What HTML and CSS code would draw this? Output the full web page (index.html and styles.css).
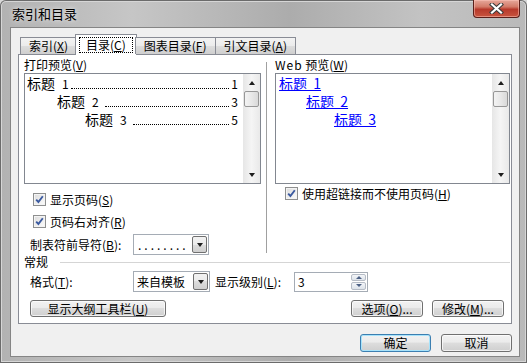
FILE: index.html
```html
<!DOCTYPE html>
<html>
<head>
    <meta charset="UTF-8">
    <title>索引和目录</title>
    <link rel="stylesheet" href="styles.css">
</head>
<body>
<div class="window">
    <div class="titlebar">
        <span class="title">索引和目录</span>
        <span class="close">
            <svg width="17" height="11" viewBox="0 0 17 11">
                <path d="M4 1.5 L13 9.5 M13 1.5 L4 9.5" stroke="#3a3a3a" stroke-width="4.2" stroke-linecap="square"/>
                <path d="M4 1.5 L13 9.5 M13 1.5 L4 9.5" stroke="#fff" stroke-width="2.2" stroke-linecap="square"/>
            </svg>
        </span>
    </div>

    <div class="client">
        <div class="tabs">
            <div class="tab">索引(<u>X</u>)</div>
            <div class="tab active"><span class="focus">目录(<u>C</u>)</span></div>
            <div class="tab">图表目录(<u>F</u>)</div>
            <div class="tab">引文目录(<u>A</u>)</div>
        </div>

        <div class="panel">
            <div class="cols">
                <div class="col">
                    <div class="caption">打印预览(<u>V</u>)</div>
                    <div class="preview">
                        <div class="lines">
                            <div class="toc"><span class="head">标题</span><span class="n">1</span><span class="dots"></span><span class="page">1</span></div>
                            <div class="toc lvl2"><span class="head">标题</span><span class="n">2</span><span class="dots"></span><span class="page">3</span></div>
                            <div class="toc lvl3"><span class="head">标题</span><span class="n">3</span><span class="dots"></span><span class="page">5</span></div>
                        </div>
                        <div class="scrollbar">
                            <div class="sb-btn"><span class="arrow-up"></span></div>
                            <div class="sb-thumb"></div>
                            <div class="sb-track"></div>
                            <div class="sb-btn"><span class="arrow-down"></span></div>
                        </div>
                    </div>

                    <label class="check first">
                        <span class="box"><svg width="11" height="11" viewBox="0 0 11 11"><path d="M2.2 5.6 L4.4 8 L8.8 2.2" fill="none" stroke="#3b5aa0" stroke-width="1.9"/></svg></span>
                        <span>显示页码(<u>S</u>)</span>
                    </label>
                    <label class="check second">
                        <span class="box"><svg width="11" height="11" viewBox="0 0 11 11"><path d="M2.2 5.6 L4.4 8 L8.8 2.2" fill="none" stroke="#3b5aa0" stroke-width="1.9"/></svg></span>
                        <span>页码右对齐(<u>R</u>)</span>
                    </label>

                    <div class="field leader">
                        <span class="field-label">制表符前导符(<u>B</u>):</span>
                        <div class="combo">
                            <span class="combo-text dotted">........</span>
                            <span class="combo-btn"><span class="arrow-down"></span></span>
                        </div>
                    </div>
                </div>

                <div class="vsep"></div>

                <div class="col">
                    <div class="caption"><span class="latin">Web</span> 预览(<u>W</u>)</div>
                    <div class="preview">
                        <div class="lines">
                            <div class="link lvl1"><a>标题&nbsp;&nbsp;1</a></div>
                            <div class="link lvl2"><a>标题&nbsp;&nbsp;2</a></div>
                            <div class="link lvl3"><a>标题&nbsp;&nbsp;3</a></div>
                        </div>
                        <div class="scrollbar">
                            <div class="sb-btn"><span class="arrow-up"></span></div>
                            <div class="sb-thumb"></div>
                            <div class="sb-track"></div>
                            <div class="sb-btn"><span class="arrow-down"></span></div>
                        </div>
                    </div>

                    <label class="check web">
                        <span class="box"><svg width="11" height="11" viewBox="0 0 11 11"><path d="M2.2 5.6 L4.4 8 L8.8 2.2" fill="none" stroke="#3b5aa0" stroke-width="1.9"/></svg></span>
                        <span>使用超链接而不使用页码(<u>H</u>)</span>
                    </label>
                </div>
            </div>

            <div class="group"><span>常规</span><span class="group-line"></span></div>

            <div class="field format">
                <span class="field-label">格式(<u>T</u>):</span>
                <div class="combo wide">
                    <span class="combo-text">来自模板</span>
                    <span class="combo-btn"><span class="arrow-down"></span></span>
                </div>
                <span class="level-label">显示级别(<u>L</u>):</span>
                <div class="spin">
                    <span class="spin-text">3</span>
                    <span class="spin-btns">
                        <span class="spin-btn"><span class="spin-up"></span></span>
                        <span class="spin-btn"><span class="spin-down"></span></span>
                    </span>
                </div>
            </div>

            <div class="panel-buttons">
                <button class="btn outline">显示大纲工具栏(<u>U</u>)</button>
                <span class="spacer"></span>
                <button class="btn small">选项(<u>O</u>)...</button>
                <button class="btn small">修改(<u>M</u>)...</button>
            </div>
        </div>

        <div class="dialog-buttons">
            <button class="btn ok default">确定</button>
            <button class="btn ok">取消</button>
        </div>
    </div>
</div>
</body>
</html>
```

FILE: styles.css
```css
body {
    margin: 0;
    font-family: "Noto Sans CJK SC", "Liberation Sans", sans-serif;
    font-size: 12px;
    color: #000;
    background: #d8d8d8;
}

.window {
    width: 527px;
    height: 363px;
    display: flex;
    flex-direction: column;
    box-sizing: border-box;
    border-radius: 6px 6px 0 0;
    background: linear-gradient(90deg, #b2b2b2 0%, #c6c6c6 25%, #acacac 55%, #c3c3c3 80%, #b9b9b9 100%);
    box-shadow: inset 0 0 0 1px #6b6b6b, inset 0 0 0 2px #d6d6d6;
}

/* titulek okna */
.titlebar {
    height: 27px;
    display: flex;
    justify-content: space-between;
    align-items: flex-start;
    flex: none;
}

.title {
    padding: 6px 0 0 12px;
    font-size: 13px;
    line-height: 16px;
    text-shadow: 0 0 5px rgba(255, 255, 255, 0.9);
}

.close {
    width: 47px;
    height: 18px;
    margin-right: 7px;
    box-sizing: border-box;
    border: 1px solid #5a1f1a;
    border-top: none;
    border-radius: 0 0 4px 4px;
    background: linear-gradient(#e6a89b, #d37a68 40%, #b7392b 55%, #c8553f 100%);
    box-shadow: inset 0 0 0 1px rgba(255, 200, 190, 0.5);
    display: flex;
    align-items: center;
    justify-content: center;
}

.client {
    flex: 1;
    margin: 0 7px 6px 10px;
    border: 1px solid #858585;
    background: #f0f0f0;
    padding: 6px 7px 0 7px;
    display: flex;
    flex-direction: column;
}

/* zalozky */
.tabs {
    display: flex;
    align-items: flex-end;
    height: 20px;
    padding-left: 2px;
    position: relative;
    z-index: 1;
}

.tab {
    height: 17px;
    box-sizing: border-box;
    border: 1px solid #898c95;
    border-bottom: none;
    padding: 0 8px;
    line-height: 15px;
    margin-right: -1px;
    background: linear-gradient(#f3f3f3, #ebebeb 50%, #dddddd 50%, #cfcfcf);
}

.tab.active {
    height: 21px;
    margin: 0 -2px -1px -1px;
    padding: 2px 3px 0;
    background: #fff;
}

.focus {
    display: inline-block;
    border: 1px dotted #000;
    padding: 0 6px;
    line-height: 14px;
}

.panel {
    height: 270px;
    box-sizing: border-box;
    border: 1px solid #898c95;
    background: #fff;
    padding: 2px 1px 0 5px;
}

.cols {
    display: grid;
    grid-template-columns: 237px 14px 1fr;
}

.vsep {
    border-left: 1px solid #a0a0a0;
    margin: 5px 0 2px 5px;
}

.caption {
    height: 16px;
    line-height: 16px;
}

.latin {
    letter-spacing: 1px;
}

.preview {
    height: 111px;
    box-sizing: border-box;
    border: 1px solid #828790;
    display: flex;
    background: #fff;
}

.lines {
    flex: 1;
    padding: 0 5px 0 2px;
}

.toc {
    display: flex;
    align-items: baseline;
    height: 18px;
    line-height: 18px;
}

.toc .head {
    font-size: 14px;
}

.toc .n {
    margin-left: 7px;
}

.dots {
    flex: 1;
    border-bottom: 1px dotted #000;
    margin: 0 2px 0 2px;
}

.toc.lvl2 {
    padding-left: 30px;
}

.toc.lvl3 {
    padding-left: 58px;
}

.toc.lvl2 .dots,
.toc.lvl3 .dots {
    margin-left: 6px;
}

.link {
    height: 18px;
    line-height: 18px;
    font-size: 14px;
}

.link a {
    color: #0000ff;
    text-decoration: underline;
}

.link.lvl1 {
    padding-left: 1px;
}

.link.lvl2 {
    padding-left: 28px;
}

.link.lvl3 {
    padding-left: 56px;
}

/* posuvnik */
.scrollbar {
    width: 17px;
    display: flex;
    flex-direction: column;
    align-items: center;
    background: linear-gradient(90deg, #e6e6e6, #f5f5f5 50%, #e9e9e9);
}

.sb-btn {
    height: 17px;
    width: 17px;
    display: flex;
    align-items: center;
    justify-content: center;
    flex: none;
}

.sb-thumb {
    width: 15px;
    height: 16px;
    box-sizing: border-box;
    border: 1px solid #979797;
    border-radius: 2px;
    background: linear-gradient(90deg, #f3f3f3, #e8e8e8 50%, #d9d9d9);
    flex: none;
}

.sb-track {
    flex: 1;
}

.arrow-up {
    width: 0;
    height: 0;
    border-left: 3.5px solid transparent;
    border-right: 3.5px solid transparent;
    border-bottom: 4px solid #1e1e1e;
}

.arrow-down {
    width: 0;
    height: 0;
    border-left: 3.5px solid transparent;
    border-right: 3.5px solid transparent;
    border-top: 4px solid #1e1e1e;
}

/* zaskrtavaci policka */
.check {
    display: flex;
    align-items: center;
    gap: 4px;
    height: 17px;
    line-height: 17px;
    padding-left: 9px;
}

.check.first {
    margin-top: 7px;
}

.check.second {
    margin-top: 5px;
}

.check.web {
    margin-top: 1px;
    padding-left: 10px;
}

.box {
    width: 13px;
    height: 13px;
    box-sizing: border-box;
    border: 1px solid #8e8f8f;
    background: linear-gradient(135deg, #dcdcdc, #fdfdfd);
    box-shadow: inset 0 0 0 1px #f4f4f4;
    display: flex;
    align-items: center;
    justify-content: center;
}

.field {
    display: flex;
    align-items: center;
    height: 21px;
    padding-left: 6px;
}

.field.leader {
    margin-top: 4px;
}

.field.format {
    margin-top: 2px;
}

.field-label {
    width: 103px;
}

.combo {
    width: 76px;
    height: 21px;
    box-sizing: border-box;
    border: 1px solid #a5acb5;
    background: #fff;
    padding: 1px;
    display: flex;
}

.combo.wide {
    width: 77px;
}

.combo-text {
    flex: 1;
    padding-left: 2px;
    line-height: 17px;
}

.combo-text.dotted {
    letter-spacing: 3px;
    padding-left: 3px;
}

.combo-btn {
    width: 15px;
    box-sizing: border-box;
    border: 1px solid #707070;
    border-radius: 2px;
    background: linear-gradient(#f2f2f2, #ebebeb 50%, #dddddd 50%, #cfcfcf);
    display: flex;
    align-items: center;
    justify-content: center;
}

.level-label {
    margin-left: 5px;
    width: 79px;
}

.spin {
    width: 74px;
    height: 20px;
    box-sizing: border-box;
    border: 1px solid #a5acb5;
    background: #fff;
    display: flex;
    padding: 1px;
}

.spin-text {
    flex: 1;
    padding-left: 2px;
    line-height: 16px;
}

.spin-btns {
    width: 15px;
    display: flex;
    flex-direction: column;
    gap: 1px;
}

.spin-btn {
    flex: 1;
    border: 1px solid #b6bcc6;
    border-radius: 2px;
    background: linear-gradient(#f4f6f9, #dde3ea);
    display: flex;
    align-items: center;
    justify-content: center;
}

.spin-up {
    border-left: 3px solid transparent;
    border-right: 3px solid transparent;
    border-bottom: 3px solid #4d6185;
}

.spin-down {
    border-left: 3px solid transparent;
    border-right: 3px solid transparent;
    border-top: 3px solid #4d6185;
}

.group {
    display: flex;
    align-items: center;
    height: 14px;
    line-height: 14px;
}

.group-line {
    flex: 1;
    margin-left: 12px;
    border-top: 1px solid #d5d5d5;
}

/* tlacitka */
.btn {
    height: 17px;
    box-sizing: border-box;
    border: 1px solid #707070;
    border-radius: 3px;
    background: linear-gradient(#f2f2f2, #ebebeb 45%, #dddddd 50%, #cfcfcf);
    box-shadow: inset 0 0 0 1px rgba(255, 255, 255, 0.7);
    font-family: inherit;
    font-size: 12px;
    line-height: 14px;
    padding: 0;
    color: #000;
}

.panel-buttons {
    display: flex;
    margin-top: 8px;
    padding: 0 6px 0 6px;
    gap: 9px;
}

.spacer {
    flex: 1;
}

.btn.outline {
    width: 136px;
}

.btn.small {
    width: 72px;
}

.dialog-buttons {
    display: flex;
    justify-content: flex-end;
    gap: 10px;
    margin-top: 10px;
}

.btn.ok {
    width: 71px;
    height: 18px;
}

.btn.default {
    border-color: #3c7fb1;
    box-shadow: inset 0 0 0 1px #a7e3fb;
}
```
